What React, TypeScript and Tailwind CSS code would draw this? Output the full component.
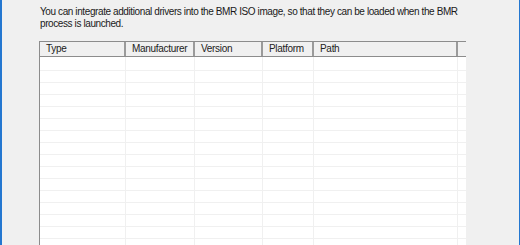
const columns = [
  { label: 'Type', width: 'w-[86px]' },
  { label: 'Manufacturer', width: 'w-[69px]' },
  { label: 'Version', width: 'w-[68px]' },
  { label: 'Platform', width: 'w-[51px]' },
  { label: 'Path', width: 'w-[144px]' },
];

const rows = Array.from({ length: 16 }, (_, i) => i);

function HeaderRow() {
  return (
    <div className="flex h-[16px] bg-[#f0f0f0] border-t border-b border-[#8c8c8c]">
      {columns.map(col => (
        <div
          key={col.label}
          className={`${col.width} shrink-0 border-r-2 border-[#9a9a9a] pl-[6px] text-[10px] leading-[14px] tracking-[-0.3px] text-[#222] whitespace-nowrap overflow-hidden`}
        >
          {col.label}
        </div>
      ))}
      <div className="w-[8px] shrink-0" />
    </div>
  );
}

function BodyRow({ first }: { first: boolean }) {
  return (
    <div className={`flex ${first ? 'h-[14px]' : 'h-[12px]'} border-b border-[#f0f0f0]`}>
      {columns.map(col => (
        <div key={col.label} className={`${col.width} shrink-0 border-r border-[#f0f0f0]`} />
      ))}
      <div className="w-[8px] shrink-0" />
    </div>
  );
}

export default function App() {
  return (
    <div
      className="w-[520px] h-[245px] overflow-hidden bg-[#f0f0f0] border-l-2 border-r border-[#2477d0] text-black"
      style={{ fontFamily: '"Liberation Sans", Arial, sans-serif' }}
    >
      {/* Intro text */}
      <p className="ml-[38px] pt-[6px] w-[430px] text-[10px] leading-[12px] tracking-[-0.4px] text-[#1a1a1a]">
        You can integrate additional drivers into the BMR ISO image, so that they can be loaded when the BMR
        process is launched.
      </p>

      {/* Driver list */}
      <div className="ml-[37px] mt-[11px] w-[427px] border-l border-[#8c8c8c] bg-white">
        <HeaderRow />
        {rows.map(i => (
          <BodyRow key={i} first={i === 0} />
        ))}
      </div>
    </div>
  );
}
